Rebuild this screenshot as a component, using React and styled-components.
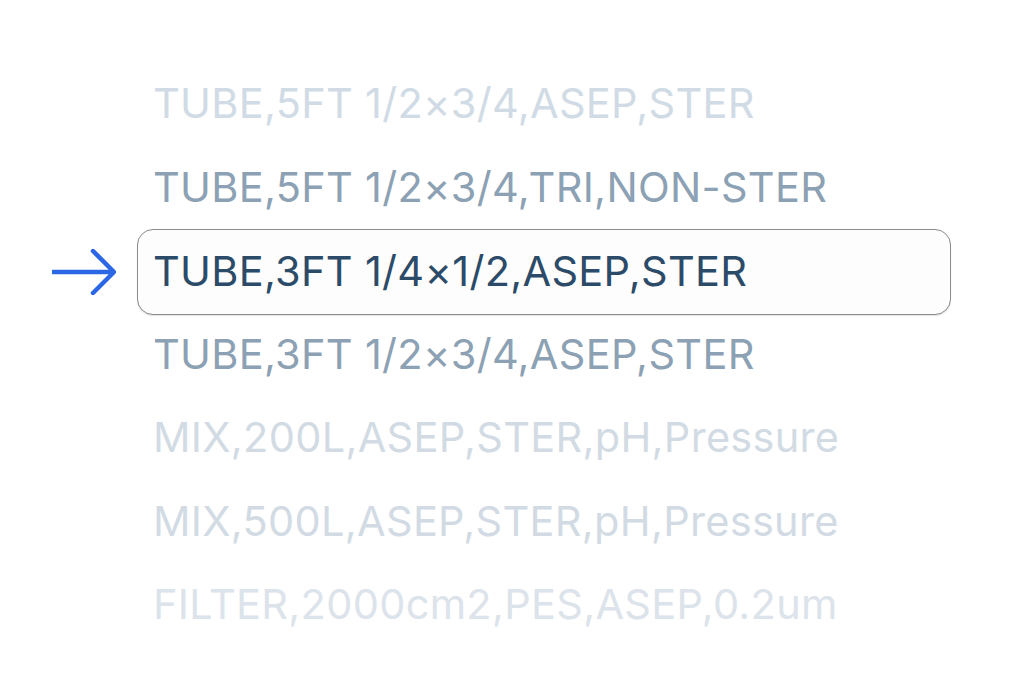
import React from "react";
import styled, { createGlobalStyle } from "styled-components";

const Global = createGlobalStyle`
  html, body { margin: 0; padding: 0; background: #ffffff; }
  body { font-family: Inter, "Noto Sans", "Liberation Sans", sans-serif; }
`;

const Page = styled.div`
  width: 1024px;
  height: 698px;
  background: #ffffff;
  padding-top: 62px;
  padding-left: 52px;
  box-sizing: border-box;
`;

const List = styled.ul`
  list-style: none;
  margin: 0;
  padding: 0;
  display: grid;
  grid-auto-rows: 83.5px;
`;

const Row = styled.li`
  display: grid;
  grid-template-columns: 64px 814px;
  column-gap: 21px;
  align-items: center;
`;

const Marker = styled.div`
  display: flex;
  align-items: center;
  height: 48px;
`;

const Label = styled.div`
  box-sizing: border-box;
  height: ${(p) => (p.$active ? "86px" : "83.5px")};
  display: flex;
  align-items: center;
  padding-left: 15px;
  border: 1.5px solid ${(p) => (p.$active ? "#8c8c8c" : "transparent")};
  border-radius: 16px;
  background: ${(p) => (p.$active ? "#fdfdfd" : "transparent")};
  box-shadow: ${(p) => (p.$active ? "0 1px 1px rgba(0,0,0,0.12)" : "none")};
  color: ${(p) => p.$color};
  font-size: 41.5px;
  font-weight: 400;
  letter-spacing: 0.3px;
  white-space: nowrap;
  line-height: 1;
`;

const items = [
  { text: "TUBE,5FT 1/2×3/4,ASEP,STER", color: "#d0dbe5" },
  { text: "TUBE,5FT 1/2×3/4,TRI,NON-STER", color: "#8ca1b3" },
  { text: "TUBE,3FT 1/4×1/2,ASEP,STER", color: "#2c4b68", active: true },
  { text: "TUBE,3FT 1/2×3/4,ASEP,STER", color: "#8ca1b3" },
  { text: "MIX,200L,ASEP,STER,pH,Pressure", color: "#d2dbe4" },
  { text: "MIX,500L,ASEP,STER,pH,Pressure", color: "#d2dbe4" },
  { text: "FILTER,2000cm2,PES,ASEP,0.2um", color: "#dce3ea" },
];

const Arrow = () => (
  <svg width="64" height="46" viewBox="0 0 64 46" fill="none">
    <path
      d="M1 23 H61 M41 2 L62 23 L41 44"
      stroke="#2b66e4"
      strokeWidth="4.5"
      strokeLinecap="round"
      strokeLinejoin="round"
    />
  </svg>
);

export default function App() {
  return (
    <Page>
      <Global />
      <List>
        {items.map((it) => (
          <Row key={it.text}>
            <Marker>{it.active ? <Arrow /> : null}</Marker>
            <Label $active={it.active} $color={it.color}>
              {it.text}
            </Label>
          </Row>
        ))}
      </List>
    </Page>
  );
}
